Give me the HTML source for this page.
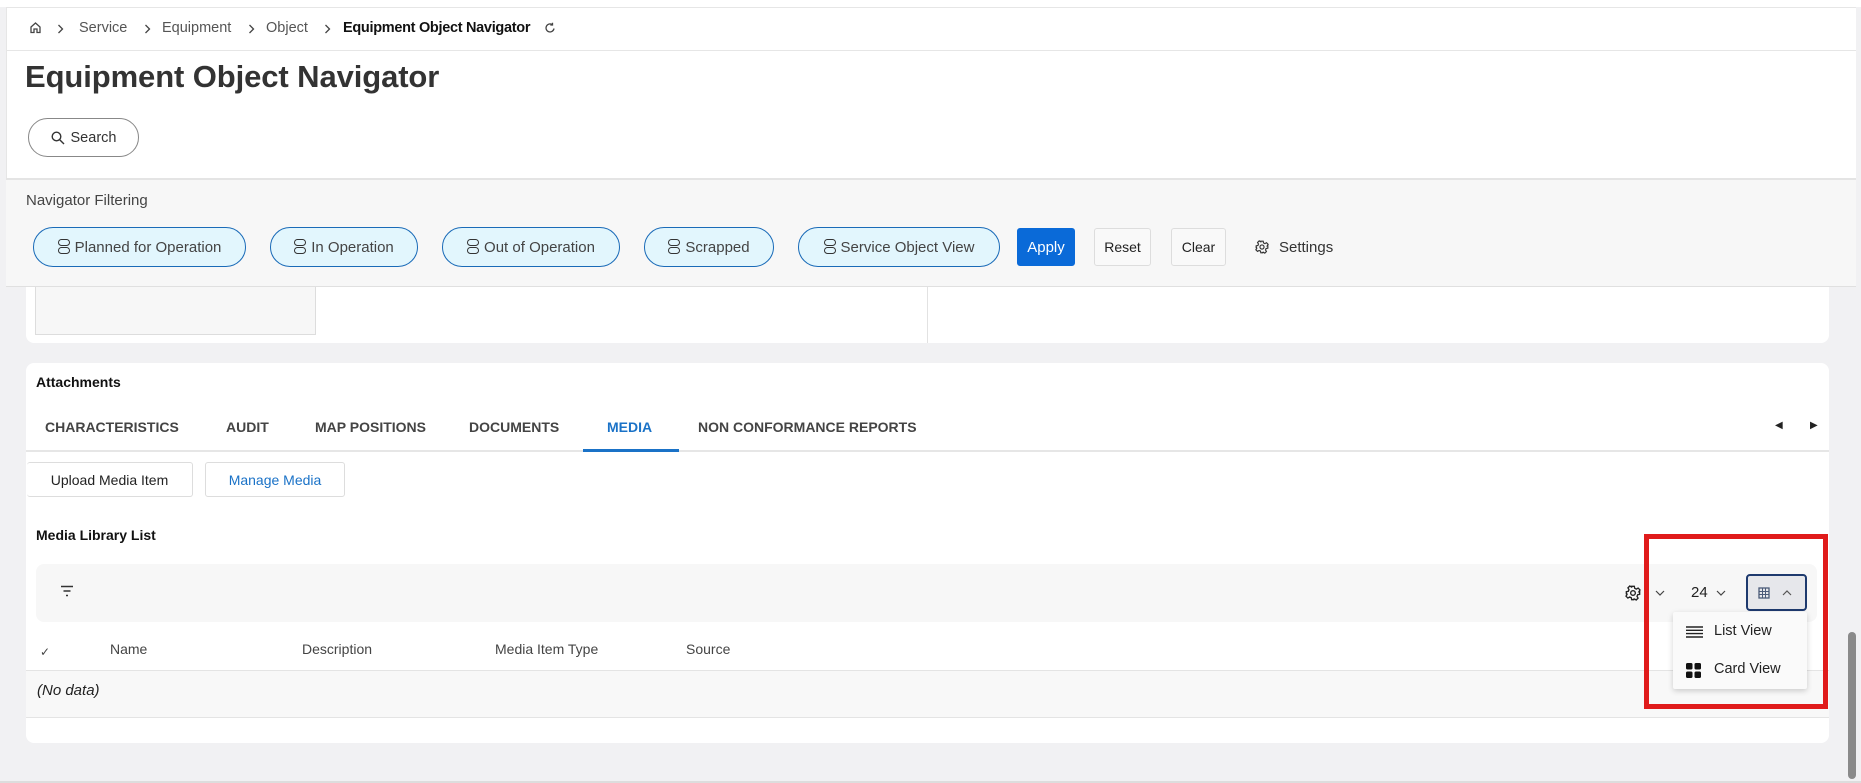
<!DOCTYPE html>
<html><head><meta charset="utf-8"><style>
*{box-sizing:border-box;margin:0;padding:0}
body{width:1861px;height:783px;overflow:hidden;background:#f1f1f3;font-family:"Liberation Sans",sans-serif;color:#333;position:relative;font-size:14px}
.a{position:absolute}
.chip{position:absolute;top:227px;height:40px;border:1px solid #1a6bb8;background:#e2f6fd;border-radius:20px;display:flex;align-items:center;justify-content:center;font-size:15px;color:#444;gap:5px}
.ic{display:inline-block;width:12px;height:16px;position:relative}
.ic i{position:absolute;left:0;width:12px;height:7px;border:1.6px solid #333;border-radius:4px}
.btn{position:absolute;border:1px solid #ddd;border-radius:3px;display:flex;align-items:center;justify-content:center;font-size:14px;background:#f9f9f9;color:#222}
.tab{position:absolute;top:419px;font-size:14px;font-weight:bold;color:#444}
.th{position:absolute;top:641px;font-size:14px;color:#444}
.chev{position:absolute;top:24px}
</style></head><body>
<div class="a" style="left:6px;top:7px;width:1850px;height:172px;background:#fff;border-top:1px solid #e6e6e6;border-left:1px solid #e6e6e6"></div>
<div class="a" style="left:0;top:0;width:1861px;height:7px;background:#fff"></div>
<div class="a" style="left:6px;top:50px;width:1850px;height:1px;background:#e6e6e6"></div>
<svg class="a" style="left:29px;top:21px" width="13" height="13" viewBox="0 0 13 13"><path d="M2 6L6.5 2 11 6V11.5H8V8H5V11.5H2Z" fill="none" stroke="#444" stroke-width="1.3"/></svg>
<svg class="chev" style="left:57px" width="7" height="10" viewBox="0 0 7 10"><path d="M1.5 1L5.5 5 1.5 9" fill="none" stroke="#444" stroke-width="1.3"/></svg>
<div class="a" style="top:20px;left:79px;font-size:14.5px;color:#555">Service</div>
<svg class="chev" style="left:144px" width="7" height="10" viewBox="0 0 7 10"><path d="M1.5 1L5.5 5 1.5 9" fill="none" stroke="#444" stroke-width="1.3"/></svg>
<div class="a" style="top:20px;left:162px;font-size:14.5px;color:#555">Equipment</div>
<svg class="chev" style="left:248px" width="7" height="10" viewBox="0 0 7 10"><path d="M1.5 1L5.5 5 1.5 9" fill="none" stroke="#444" stroke-width="1.3"/></svg>
<div class="a" style="top:20px;left:266px;font-size:14.5px;color:#555">Object</div>
<svg class="chev" style="left:324px" width="7" height="10" viewBox="0 0 7 10"><path d="M1.5 1L5.5 5 1.5 9" fill="none" stroke="#444" stroke-width="1.3"/></svg>
<div class="a" style="top:20px;left:343px;font-size:14.5px;color:#111;font-weight:bold;letter-spacing:-0.3px">Equipment Object Navigator</div>
<svg class="a" style="left:544px;top:22px" width="12" height="12" viewBox="0 0 12 12"><path d="M10 6.5A4 4 0 1 1 8.5 2.8M8.5 0.8V3H6.3" fill="none" stroke="#444" stroke-width="1.3"/></svg>
<div class="a" style="top:59px;left:25px;font-size:31px;font-weight:bold;color:#333;letter-spacing:-0.1px">Equipment Object Navigator</div>
<div class="a" style="left:28px;top:118px;width:111px;height:39px;border:1px solid #888;border-radius:20px;display:flex;align-items:center;justify-content:center;gap:6px;font-size:14.5px;color:#333"><svg width="14" height="14" viewBox="0 0 14 14"><circle cx="5.5" cy="5.5" r="4.3" fill="none" stroke="#333" stroke-width="1.4"/><path d="M8.7 8.7L13 13" stroke="#333" stroke-width="1.4"/></svg>Search</div>
<div class="a" style="left:6px;top:178px;width:1850px;height:109px;background:#f7f7f7;border-top:2px solid #e4e4e4;border-bottom:1px solid #e0e0e0"></div>
<div class="a" style="top:192px;left:26px;font-size:15px;color:#444">Navigator Filtering</div>
<div class="chip" style="left:33px;width:213px"><span class="ic"><i style="top:0"></i><i style="top:8px"></i></span>Planned for Operation</div>
<div class="chip" style="left:270px;width:148px"><span class="ic"><i style="top:0"></i><i style="top:8px"></i></span>In Operation</div>
<div class="chip" style="left:442px;width:178px"><span class="ic"><i style="top:0"></i><i style="top:8px"></i></span>Out of Operation</div>
<div class="chip" style="left:644px;width:130px"><span class="ic"><i style="top:0"></i><i style="top:8px"></i></span>Scrapped</div>
<div class="chip" style="left:798px;width:202px"><span class="ic"><i style="top:0"></i><i style="top:8px"></i></span>Service Object View</div>
<div class="btn" style="left:1017px;top:228px;width:58px;height:38px;background:#0a6ad8;border-color:#0a6ad8;color:#fff;font-size:15px">Apply</div>
<div class="btn" style="left:1094px;top:228px;width:57px;height:38px">Reset</div>
<div class="btn" style="left:1171px;top:228px;width:55px;height:38px">Clear</div>
<svg class="a" style="left:1255px;top:240px" width="14" height="14" viewBox="0 0 24 24"><circle cx="12" cy="12" r="3.5" fill="none" stroke="#333" stroke-width="2"/><path d="M10 2h4l.6 3 2.4 1.2 2.7-1.6 2.8 2.8-1.6 2.7L22 10v4l-3 .6-1 2.4 1.6 2.7-2.8 2.8-2.7-1.6-2.4 1L14 22h-4l-.6-3-2.4-1-2.7 1.6-2.8-2.8 1.6-2.7-1-2.4L2 14v-4l3-.6 1-2.4-1.6-2.7 2.8-2.8 2.7 1.6L10 2z" fill="none" stroke="#333" stroke-width="2"/></svg>
<div class="a" style="top:239px;left:1279px;font-size:15px;color:#333">Settings</div>
<div class="a" style="left:26px;top:287px;width:1803px;height:56px;background:#fff;border-radius:0 0 8px 8px"></div>
<div class="a" style="left:35px;top:287px;width:281px;height:48px;background:#f7f7f7;border:1px solid #ddd;border-top:none"></div>
<div class="a" style="left:927px;top:287px;width:1px;height:56px;background:#e2e2e2"></div>
<div class="a" style="left:26px;top:363px;width:1803px;height:380px;background:#fff;border-radius:8px"></div>
<div class="a" style="top:374px;left:36px;font-size:14px;font-weight:bold;color:#111">Attachments</div>
<div class="tab" style="left:45px">CHARACTERISTICS</div>
<div class="tab" style="left:226px">AUDIT</div>
<div class="tab" style="left:315px">MAP POSITIONS</div>
<div class="tab" style="left:469px">DOCUMENTS</div>
<div class="tab" style="left:607px;color:#1a72c7">MEDIA</div>
<div class="tab" style="left:698px">NON CONFORMANCE REPORTS</div>
<div class="a" style="left:1775px;top:420px;font-size:10px;color:#222">◀</div>
<div class="a" style="left:1810px;top:420px;font-size:10px;color:#222">▶</div>
<div class="a" style="left:26px;top:450px;width:1803px;height:2px;background:#e6e6e6"></div>
<div class="a" style="left:583px;top:449px;width:96px;height:3px;background:#1a72c7"></div>
<div class="btn" style="left:27px;top:462px;width:166px;height:35px;background:#fff;border-left:none">Upload Media Item</div>
<div class="btn" style="left:205px;top:462px;width:140px;height:35px;background:#fff;color:#1a72c7">Manage Media</div>
<div class="a" style="top:527px;left:36px;font-size:14px;font-weight:bold;color:#111">Media Library List</div>
<div class="a" style="left:36px;top:564px;width:1781px;height:58px;background:#f7f7f7;border-radius:8px"></div>
<svg class="a" style="left:60px;top:585px" width="14" height="12" viewBox="0 0 14 12"><path d="M1 1.5H13M3.5 6H10.5M6 10.5H8" stroke="#333" stroke-width="1.4"/></svg>
<svg class="a" style="left:1625px;top:585px" width="16" height="16" viewBox="0 0 24 24"><circle cx="12" cy="12" r="3.5" fill="none" stroke="#222" stroke-width="2"/><path d="M10 2h4l.6 3 2.4 1.2 2.7-1.6 2.8 2.8-1.6 2.7L22 10v4l-3 .6-1 2.4 1.6 2.7-2.8 2.8-2.7-1.6-2.4 1L14 22h-4l-.6-3-2.4-1-2.7 1.6-2.8-2.8 1.6-2.7-1-2.4L2 14v-4l3-.6 1-2.4-1.6-2.7 2.8-2.8 2.7 1.6L10 2z" fill="none" stroke="#222" stroke-width="2"/></svg>
<svg class="a" style="left:1655px;top:590px" width="10" height="6" viewBox="0 0 10 6"><path d="M1 1L5 5 9 1" fill="none" stroke="#444" stroke-width="1.2"/></svg>
<div class="a" style="left:1691px;top:584px;font-size:15px;color:#222">24</div>
<svg class="a" style="left:1716px;top:590px" width="10" height="6" viewBox="0 0 10 6"><path d="M1 1L5 5 9 1" fill="none" stroke="#444" stroke-width="1.2"/></svg>
<div class="a" style="left:1746px;top:574px;width:61px;height:37px;border:2px solid #1e3a6e;border-radius:4px;background:#e6e7eb"></div>
<svg class="a" style="left:1758px;top:587px" width="12" height="12" viewBox="0 0 12 12"><rect x="1" y="1" width="10" height="10" fill="none" stroke="#4a5a78" stroke-width="1.3"/><path d="M1 4.5H11M1 7.5H11M4.5 1V11M7.5 1V11" stroke="#4a5a78" stroke-width="1"/></svg>
<svg class="a" style="left:1782px;top:590px" width="10" height="6" viewBox="0 0 10 6"><path d="M1 5L5 1 9 5" fill="none" stroke="#555" stroke-width="1.2"/></svg>
<div class="th" style="left:40px;font-size:12px;top:645px">✓</div>
<div class="th" style="left:110px">Name</div>
<div class="th" style="left:302px">Description</div>
<div class="th" style="left:495px">Media Item Type</div>
<div class="th" style="left:686px">Source</div>
<div class="a" style="left:26px;top:670px;width:1803px;height:48px;background:#f8f8f8;border-top:1px solid #e4e4e4;border-bottom:1px solid #e4e4e4"></div>
<div class="a" style="left:37px;top:682px;font-size:15px;font-style:italic;color:#222">(No data)</div>
<div class="a" style="left:1673px;top:612px;width:134px;height:77px;background:#fafafa;box-shadow:0 2px 6px rgba(0,0,0,.18);border-radius:2px"></div>
<svg class="a" style="left:1686px;top:626px" width="17" height="12" viewBox="0 0 17 12"><path d="M0 1H17M0 4.3H17M0 7.6H17M0 11H17" stroke="#222" stroke-width="1.4"/></svg>
<div class="a" style="left:1714px;top:623px;font-size:14.5px;color:#222">List View</div>
<svg class="a" style="left:1686px;top:663px" width="15" height="15" viewBox="0 0 15 15"><rect x="0" y="0" width="6.5" height="6.5" rx="1.5" fill="#111"/><rect x="8.5" y="0" width="6.5" height="6.5" rx="1.5" fill="#111"/><rect x="0" y="8.5" width="6.5" height="6.5" rx="1.5" fill="#111"/><rect x="8.5" y="8.5" width="6.5" height="6.5" rx="1.5" fill="#111"/></svg>
<div class="a" style="left:1714px;top:661px;font-size:14.5px;color:#222">Card View</div>
<div class="a" style="left:1644px;top:534px;width:184px;height:175px;border:5px solid #e01b1b"></div>
<div class="a" style="left:1848px;top:632px;width:8px;height:147px;background:#8a8a8a;border-radius:4px"></div>
<div class="a" style="left:0;top:781px;width:1861px;height:2px;background:#ddd"></div>
</body></html>
